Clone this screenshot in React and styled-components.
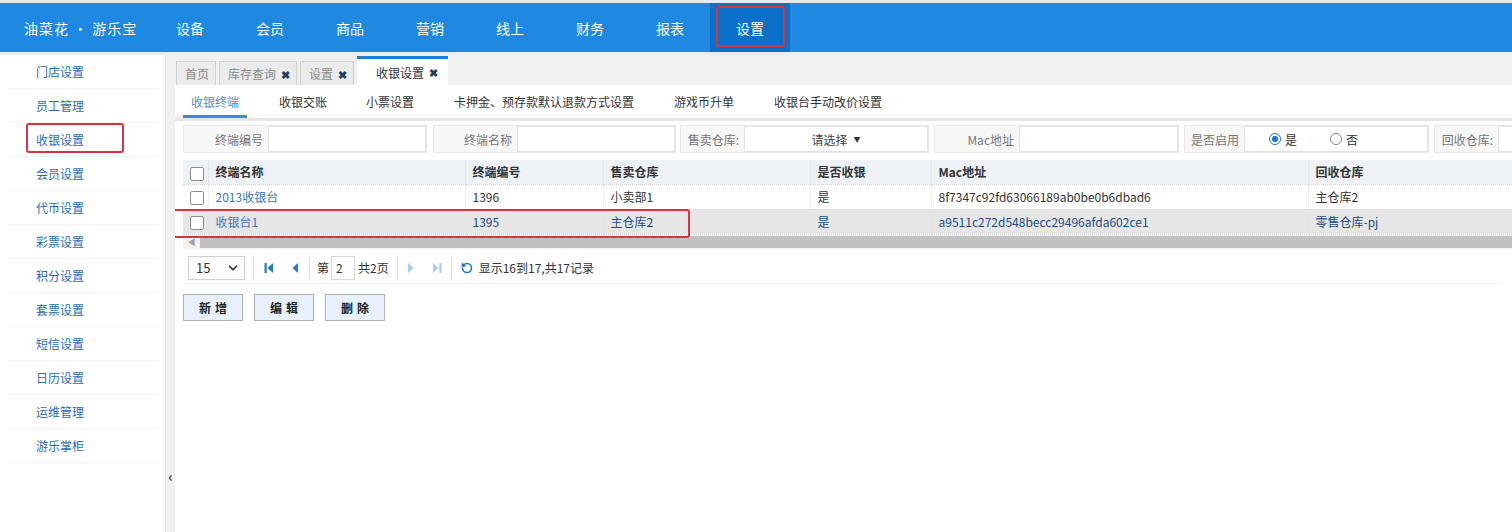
import React from 'react';
import styled, { createGlobalStyle } from 'styled-components';
import { ChevronDown, RotateCw } from 'lucide-react';

const GlobalStyle = createGlobalStyle`
  html, body {
    margin: 0;
    padding: 0;
    background: #fff;
    overflow: hidden;
  }
  body {
    font-family: "Noto Sans CJK SC", "Noto Sans", Arial, sans-serif;
    font-size: 12px;
    color: #333;
  }
  * { box-sizing: border-box; }
`;

const Page = styled.div`
  width: 1512px;
  height: 532px;
  display: flex;
  flex-direction: column;
  border-top: 3px solid #e3ebf3;
`;

// top navigation
const Header = styled.div`
  height: 49px;
  background: #1f89e1;
  display: flex;
  align-items: stretch;
  border-bottom: 3px solid #e2eef9;
  box-sizing: content-box;
`;

const Logo = styled.div`
  width: 150px;
  padding-left: 24px;
  display: flex;
  align-items: center;
  color: #fff;
  font-size: 14px;
  letter-spacing: 1px;
`;

const NavItem = styled.div`
  position: relative;
  width: 80px;
  display: flex;
  align-items: center;
  justify-content: center;
  color: #fff;
  font-size: 14px;
  background: ${p => (p.$active ? '#0b70c9' : 'transparent')};
`;

const Mark = styled.div`
  position: absolute;
  border: 2px solid #d9343d;
  border-radius: 3px;
  pointer-events: none;
`;

const Body = styled.div`
  flex: 1;
  display: flex;
  min-height: 0;
`;

// left menu
const Sidebar = styled.div`
  width: 165px;
  background: #fff;
  display: flex;
  flex-direction: column;
`;

const MenuItem = styled.div`
  position: relative;
  height: 34px;
  margin: 0 7px 0 8px;
  padding-left: 28px;
  display: flex;
  align-items: center;
  color: #2b6cb3;
  font-size: 12px;
  border-bottom: 1px solid #f0f2f4;
`;

const Collapse = styled.div`
  width: 10px;
  background: #f1f1f1;
  border-left: 1px solid #e6e6e6;
  display: flex;
  flex-direction: column;
  justify-content: flex-end;
  align-items: center;
  padding-bottom: 46px;
  color: #444;
  font-size: 14px;
  font-weight: bold;
`;

const Main = styled.div`
  flex: 1;
  min-width: 0;
  overflow: hidden;
  display: flex;
  flex-direction: column;
`;

// opened page tabs
const TabBar = styled.div`
  height: 30px;
  background: #f0f0f0;
  display: flex;
  align-items: flex-end;
  gap: 3px;
  padding-left: 1px;
`;

const Tab = styled.div`
  height: ${p => (p.$active ? '29px' : '24px')};
  padding: ${p => (p.$active ? '0 10px 0 19px' : '0 6px 0 8px')};
  display: flex;
  align-items: center;
  gap: 5px;
  font-size: 12px;
  color: ${p => (p.$active ? '#333' : '#8a8a8a')};
  background: ${p => (p.$active ? '#fff' : '#ebebeb')};
  border: ${p => (p.$active ? 'none' : '1px solid #cfcfcf')};
  border-bottom: none;
  border-top: ${p => (p.$active ? '3px solid #1e7fd4' : '1px solid #cfcfcf')};
`;

const Close = styled.span`
  color: #1f3d63;
  font-size: 11px;
  font-weight: bold;
`;

const SubTabs = styled.div`
  height: 36px;
  display: flex;
  align-items: stretch;
  padding-left: 8px;
  border-bottom: 3px solid #e6e6e6;
`;

const SubTab = styled.div`
  position: relative;
  padding: 0 8px;
  margin-right: ${p => p.$gap}px;
  display: flex;
  align-items: center;
  font-size: 12px;
  color: ${p => (p.$active ? '#4a8ee0' : '#333')};
  &::after {
    content: '';
    display: ${p => (p.$active ? 'block' : 'none')};
    position: absolute;
    left: 0;
    right: 0;
    bottom: 0;
    height: 3px;
    background: #3a8be0;
  }
`;

// search filters
const Filters = styled.div`
  display: flex;
  padding: 4px 0 0 8px;
  height: 32px;
  box-sizing: content-box;
`;

const Field = styled.div`
  display: flex;
  height: 28px;
  margin-right: ${p => p.$gap ?? 5}px;
  border: 1px solid #e8e8e8;
  background: #f7f7f7;
  flex-shrink: 0;
`;

const Label = styled.div`
  width: ${p => p.$w}px;
  display: flex;
  align-items: center;
  justify-content: flex-end;
  padding-right: 5px;
  color: #777;
  font-size: 12px;
`;

const Input = styled.div`
  width: ${p => p.$w}px;
  background: #fff;
  border: 1px solid #e2e2e2;
  display: flex;
  align-items: center;
  justify-content: ${p => (p.$center ? 'center' : 'flex-start')};
  gap: 6px;
  color: #444;
`;

const Caret = styled.span`
  font-size: 7px;
  color: #333;
`;

const Radio = styled.span`
  display: inline-flex;
  align-items: center;
  gap: 4px;
  margin-left: ${p => p.$ml}px;
  color: #333;
`;

const Dot = styled.span`
  width: 12px;
  height: 12px;
  border-radius: 50%;
  border: 1px solid ${p => (p.$on ? '#1a73d9' : '#888')};
  background: #fff;
  display: inline-flex;
  align-items: center;
  justify-content: center;
  &::after {
    content: '';
    width: 6px;
    height: 6px;
    border-radius: 50%;
    background: ${p => (p.$on ? '#1a73d9' : 'transparent')};
  }
`;

// grid
const TableWrap = styled.div`
  position: relative;
  margin: 3px 0 0 8px;
`;

const Table = styled.table`
  border-collapse: collapse;
  table-layout: fixed;
  width: 1430px;
`;

const Th = styled.th`
  width: ${p => p.$w}px;
  height: 24px;
  padding: 0 0 0 7px;
  text-align: left;
  font-weight: bold;
  color: #333;
  background: #eef2f6;
  border-right: 1px dotted #d8dde3;
  border-bottom: 1px dotted #d0d0d0;
`;

const Tr = styled.tr`
  background: ${p => (p.$sel ? '#e6e6e6' : '#fff')};
  color: ${p => (p.$sel ? '#1b4d86' : '#333')};
`;

const Td = styled.td`
  height: 25px;
  padding-left: 7px;
  white-space: nowrap;
  border-right: 1px dotted #e2e2e2;
  border-bottom: 1px dotted #d4d4d4;
  color: ${p => (p.$link ? '#3e77b6' : 'inherit')};
`;

const Check = styled.span`
  display: inline-block;
  width: 14px;
  height: 14px;
  border: 1px solid #8e8e8e;
  border-radius: 2px;
  background: #fff;
  vertical-align: middle;
`;

const ScrollBar = styled.div`
  height: 14px;
  display: flex;
  background: #f1f1f1;
`;

const ScrollArrow = styled.div`
  width: 17px;
  display: flex;
  align-items: center;
  justify-content: center;
  color: #a0a0a0;
  font-size: 8px;
`;

const Thumb = styled.div`
  flex: 1;
  margin: 1px 0;
  background: #c1c1c1;
`;

// pager
const Pager = styled.div`
  height: 31px;
  margin: 4px 0 0 8px;
  padding-left: 5px;
  display: flex;
  align-items: center;
  border-bottom: 1px solid #f0f0f0;
  width: 1320px;
  color: #333;
`;

const PageSize = styled.div`
  width: 57px;
  height: 24px;
  border: 1px solid #d0d0d0;
  display: flex;
  align-items: center;
  justify-content: space-between;
  padding: 0 4px 0 7px;
  font-size: 13px;
`;

const Sep = styled.div`
  width: 1px;
  height: 22px;
  background: #dcdcdc;
  margin: 0 ${p => p.$r ?? 8}px 0 ${p => p.$l ?? 8}px;
`;

const PageBtn = styled.span`
  width: 26px;
  display: inline-flex;
  align-items: center;
  justify-content: center;
`;

const PageInput = styled.div`
  width: 24px;
  height: 24px;
  border: 1px solid #d6d6d6;
  display: flex;
  align-items: center;
  padding-left: 4px;
  margin: 0 3px 0 2px;
`;

const Actions = styled.div`
  display: flex;
  gap: 11px;
  padding: 10px 0 0 8px;
`;

const Button = styled.div`
  width: 60px;
  height: 27px;
  border: 1px solid #b0b0b0;
  background: #e8f0fb;
  display: flex;
  align-items: center;
  justify-content: center;
  font-size: 12px;
  font-weight: bold;
  letter-spacing: 4px;
  padding-left: 4px;
  color: #222;
`;

const Tri = ({ dir, bar, color }) => (
  <svg width="12" height="14" viewBox="0 0 12 14">
    {dir === 'left' ? (
      <>
        {bar && <rect x="1.5" y="2" width="2.2" height="10" fill={color} />}
        <polygon points={bar ? '10,2 10,12 4.5,7' : '9,2 9,12 3.5,7'} fill={color} />
      </>
    ) : (
      <>
        <polygon points={bar ? '2,2 2,12 7.5,7' : '3,2 3,12 8.5,7'} fill={color} />
        {bar && <rect x="8.3" y="2" width="2.2" height="10" fill={color} />}
      </>
    )}
  </svg>
);

const navs = ['设备', '会员', '商品', '营销', '线上', '财务', '报表', '设置'];
const menus = ['门店设置', '员工管理', '收银设置', '会员设置', '代币设置', '彩票设置', '积分设置', '套票设置', '短信设置', '日历设置', '运维管理', '游乐掌柜'];
const subTabs = [
  ['收银终端', 24],
  ['收银交账', 23],
  ['小票设置', 24],
  ['卡押金、预存款默认退款方式设置', 24],
  ['游戏币升单', 24],
  ['收银台手动改价设置', 0],
];
const cols = [
  ['', 25], ['终端名称', 257], ['终端编号', 138], ['售卖仓库', 207],
  ['是否收银', 121], ['Mac地址', 377], ['回收仓库', 305],
];
const rows = [
  { name: '2013收银台', no: '1396', store: '小卖部1', cash: '是', mac: '8f7347c92fd63066189ab0be0b6dbad6', back: '主仓库2' },
  { name: '收银台1', no: '1395', store: '主仓库2', cash: '是', mac: 'a9511c272d548becc29496afda602ce1', back: '零售仓库-pj', sel: true },
];

export default function App() {
  return (
    <Page>
      <GlobalStyle />
      <Header>
        <Logo>油菜花 · 游乐宝</Logo>
        {navs.map(n => (
          <NavItem key={n} $active={n === '设置'}>
            {n}
            {n === '设置' && <Mark style={{ left: 6, right: 5, top: 3, bottom: 5 }} />}
          </NavItem>
        ))}
      </Header>
      <Body>
        <Sidebar>
          {menus.map(m => (
            <MenuItem key={m}>
              {m}
              {m === '收银设置' && <Mark style={{ left: 18, width: 98, top: 0, height: 30 }} />}
            </MenuItem>
          ))}
        </Sidebar>
        <Collapse>‹</Collapse>
        <Main>
          <TabBar>
            <Tab>首页</Tab>
            <Tab>库存查询 <Close>✖</Close></Tab>
            <Tab>设置 <Close>✖</Close></Tab>
            <Tab $active>收银设置 <Close>✖</Close></Tab>
          </TabBar>
          <SubTabs>
            {subTabs.map(([t, g], i) => (
              <SubTab key={t} $active={i === 0} $gap={g}>{t}</SubTab>
            ))}
          </SubTabs>
          <Filters>
            <Field $gap={6}><Label $w={84}>终端编号</Label><Input $w={158} /></Field>
            <Field $gap={4}><Label $w={83}>终端名称</Label><Input $w={158} /></Field>
            <Field>
              <Label $w={63}>售卖仓库:</Label>
              <Input $w={184} $center>请选择 <Caret>▼</Caret></Input>
            </Field>
            <Field><Label $w={84}>Mac地址</Label><Input $w={159} /></Field>
            <Field>
              <Label $w={59}>是否启用</Label>
              <Input $w={184}>
                <Radio $ml={24}><Dot $on />是</Radio>
                <Radio $ml={27}><Dot />否</Radio>
              </Input>
            </Field>
            <Field><Label $w={63}>回收仓库:</Label><Input $w={160} /></Field>
          </Filters>
          <TableWrap>
            <Table>
              <thead>
                <tr>
                  {cols.map(([c, w], i) => (
                    <Th key={i} $w={w}>{i === 0 ? <Check /> : c}</Th>
                  ))}
                </tr>
              </thead>
              <tbody>
                {rows.map(r => (
                  <Tr key={r.no} $sel={r.sel}>
                    <Td><Check /></Td>
                    <Td $link>{r.name}</Td>
                    <Td>{r.no}</Td>
                    <Td>{r.store}</Td>
                    <Td>{r.cash}</Td>
                    <Td>{r.mac}</Td>
                    <Td>{r.back}</Td>
                  </Tr>
                ))}
              </tbody>
            </Table>
            <ScrollBar>
              <ScrollArrow>◀</ScrollArrow>
              <Thumb />
            </ScrollBar>
            <Mark style={{ left: -10, top: 49, width: 517, height: 29 }} />
          </TableWrap>
          <Pager>
            <PageSize>15 <ChevronDown size={14} strokeWidth={3} color="#333" /></PageSize>
            <Sep $r={2} />
            <PageBtn><Tri dir="left" bar color="#1f78d1" /></PageBtn>
            <PageBtn><Tri dir="left" color="#1f78d1" /></PageBtn>
            <Sep $l={1} $r={7} />
            第<PageInput>2</PageInput>共2页
            <Sep $r={0} />
            <PageBtn><Tri dir="right" color="#a9cdee" /></PageBtn>
            <PageBtn><Tri dir="right" bar color="#a9cdee" /></PageBtn>
            <Sep $l={1} $r={9} />
            <RotateCw size={12} strokeWidth={3.2} color="#1f78d1" style={{ marginRight: 6, transform: 'scaleX(-1)' }} />
            显示16到17,共17记录
          </Pager>
          <Actions>
            <Button>新增</Button>
            <Button>编辑</Button>
            <Button>删除</Button>
          </Actions>
        </Main>
      </Body>
    </Page>
  );
}
